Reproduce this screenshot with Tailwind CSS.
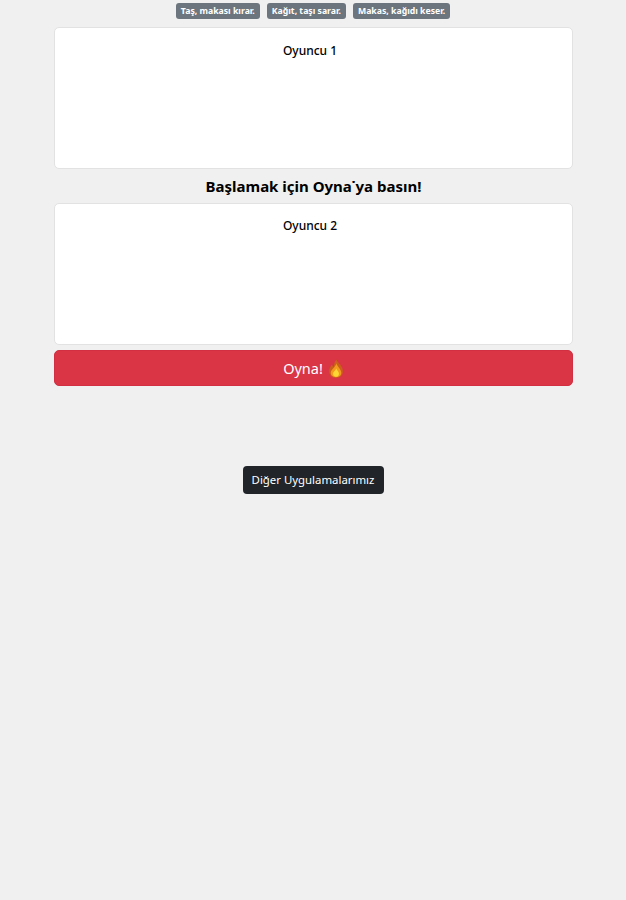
<!DOCTYPE html>
<html lang="tr">
  <head>
    <meta charset="UTF-8" />
    <meta name="viewport" content="width=device-width, initial-scale=1.0" />
    <title>Taş Kağıt Makas</title>
    <script src="https://cdn.jsdelivr.net/npm/@tailwindcss/browser@4"></script>
  </head>
  <body class="bg-[#f0f0f0] font-['Noto_Sans',sans-serif] text-black">
    <main class="h-[900px] overflow-hidden">
      <!-- Rules -->
      <div class="flex justify-center gap-[7px] pt-[3px]">
        <span class="h-4 rounded-[3px] bg-[#6c757d] px-[5px] text-[8.7px] leading-4 font-bold text-white">Taş, makası kırar.</span>
        <span class="h-4 rounded-[3px] bg-[#6c757d] px-[5px] text-[8.7px] leading-4 font-bold text-white">Kağıt, taşı sarar.</span>
        <span class="h-4 rounded-[3px] bg-[#6c757d] px-[5px] text-[8.7px] leading-4 font-bold text-white">Makas, kağıdı keser.</span>
      </div>

      <div class="mx-[54px] mt-2 w-[519px]">
        <!-- Player 1 -->
        <div class="h-[142px] rounded-[5px] border border-[#e2e2e2] bg-white pt-[14px] pr-[7px] text-center text-[12px] leading-[18px] font-medium">
          Oyuncu 1
        </div>

        <h5 class="h-[35px] text-center text-[15px] leading-[35px] font-bold">Başlamak için Oyna˙ya basın!</h5>

        <!-- Player 2 -->
        <div class="-mt-px h-[142px] rounded-[5px] border border-[#e2e2e2] bg-white pt-[13px] pr-[7px] text-center text-[12px] leading-[18px] font-medium">
          Oyuncu 2
        </div>

        <button class="mt-[5px] flex h-[36px] w-full items-center justify-center gap-[5px] rounded-[5px] border border-[#d32f42] bg-[#da3545] pt-px text-[14.5px] text-white">
          Oyna!
          <svg width="16" height="19" viewBox="0 0 14 18">
            <path d="M7.5 0.5C8.5 3.5 13.5 6.5 13.5 11.5C13.5 15.5 10.5 17.8 7 17.8C3.5 17.8 0.5 15.5 0.5 11.5C0.5 8.5 2.2 6.8 3.2 5.2C3.8 6.5 4.2 7 5 7.4C5 4.5 6 2 7.5 0.5Z" fill="#c9601c" />
            <path d="M7.4 4C8 7 12 9.5 12 13C12 15.8 9.6 17.2 7 17.2C4.4 17.2 2 15.8 2 13C2 10.2 6.5 8 7.4 4Z" fill="#f39a1f" />
            <path d="M7.2 9C7.8 10.8 9.8 12 9.8 14C9.8 15.8 8.6 16.8 7 16.8C5.4 16.8 4.2 15.8 4.2 14C4.2 12 6.7 11 7.2 9Z" fill="#fdd835" />
          </svg>
        </button>
      </div>

      <div class="mt-20 flex justify-center">
        <button class="h-7 w-[141px] rounded-[4px] bg-[#212529] text-[11.4px] text-white">Diğer Uygulamalarımız</button>
      </div>
    </main>
  </body>
</html>
